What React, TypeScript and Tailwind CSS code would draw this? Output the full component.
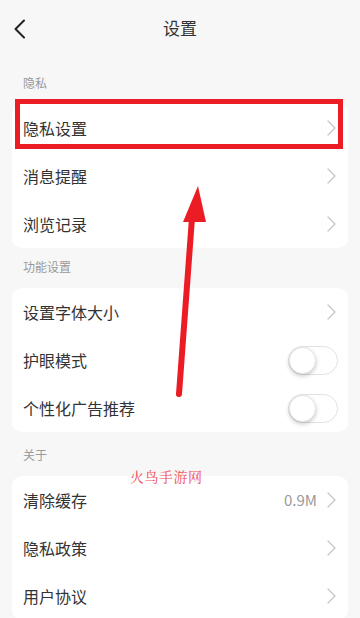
import React from 'react';

const font = { fontFamily: '"Noto Sans CJK SC", "Noto Sans", sans-serif' };

function Chevron() {
  return (
    <svg width="9" height="16" viewBox="0 0 9 16" fill="none" className="shrink-0">
      <path d="M1 1 L8 8 L1 15" stroke="#c6c6c6" strokeWidth="1.3" strokeLinecap="round" strokeLinejoin="round" />
    </svg>
  );
}

function Toggle() {
  return (
    <div className="relative w-[50px] h-[29px] rounded-full bg-white border border-[#e2e2e2] shrink-0">
      <div className="absolute left-0 top-0 w-[27px] h-[27px] rounded-full bg-white shadow-[0_2px_4px_rgba(0,0,0,0.22)] border border-[#e6e6e6]" />
    </div>
  );
}

type Row = { label: string; kind: 'link' | 'toggle'; value?: string };

function Section({ title, rows, pt }: { title: string; rows: Row[]; pt: string }) {
  return (
    <>
      <div className={`${pt} pb-3 px-[23px] text-[12px] leading-[18px] text-[#9a9a9a]`}>{title}</div>
      <div className="mx-3 bg-white rounded-[10px]">
        {rows.map((r) => (
          <div key={r.label} className="h-12 flex items-center pl-[11px] pr-[10px]">
            <span className="flex-1 text-[16px] text-[#333333]">{r.label}</span>
            {r.value && <span className="text-[15px] text-[#9a9a9a] mr-[10px]">{r.value}</span>}
            {r.kind === 'link' ? <span className="pr-[2px]"><Chevron /></span> : <Toggle />}
          </div>
        ))}
      </div>
    </>
  );
}

export default function App() {
  return (
    <div className="relative w-[360px] h-[618px] overflow-hidden bg-[#f7f7f7]" style={font}>
      <div className="h-14 grid grid-cols-[60px_1fr_60px] items-center">
        <div className="pl-[13px] pt-[1px]">
          <svg width="14" height="20" viewBox="0 0 14 20" fill="none">
            <path d="M11 1.5 L2.5 10 L11 18.5" stroke="#222222" strokeWidth="2" strokeLinecap="round" strokeLinejoin="round" />
          </svg>
        </div>
        <div className="text-center text-[17px] text-[#333333]">设置</div>
        <div />
      </div>

      <Section
        title="隐私"
        pt="pt-[18px]"
        rows={[
          { label: '隐私设置', kind: 'link' },
          { label: '消息提醒', kind: 'link' },
          { label: '浏览记录', kind: 'link' },
        ]}
      />
      <Section
        title="功能设置"
        pt="pt-[10px]"
        rows={[
          { label: '设置字体大小', kind: 'link' },
          { label: '护眼模式', kind: 'toggle' },
          { label: '个性化广告推荐', kind: 'toggle' },
        ]}
      />
      <Section
        title="关于"
        pt="pt-[14px]"
        rows={[
          { label: '清除缓存', kind: 'link', value: '0.9M' },
          { label: '隐私政策', kind: 'link' },
          { label: '用户协议', kind: 'link' },
        ]}
      />

      {/* annotation overlays */}
      <div className="absolute left-[15px] top-[99px] w-[328px] h-[50px] border-[5px] border-[#ec1c24]" />
      <svg className="absolute inset-0 pointer-events-none" width="360" height="618">
        <line x1="179" y1="394" x2="192" y2="218" stroke="#ec1c24" strokeWidth="6" strokeLinecap="round" />
        <polygon points="198,186 183,222 206,222" fill="#ec1c24" />
      </svg>
      <div className="absolute left-[130px] top-[467px] text-[14px] leading-[18px] tracking-[0.5px] text-[#f0505c]" style={{ fontFamily: '"Noto Serif CJK SC", "Noto Sans CJK SC", serif' }}>
        火鸟手游网
      </div>
    </div>
  );
}
